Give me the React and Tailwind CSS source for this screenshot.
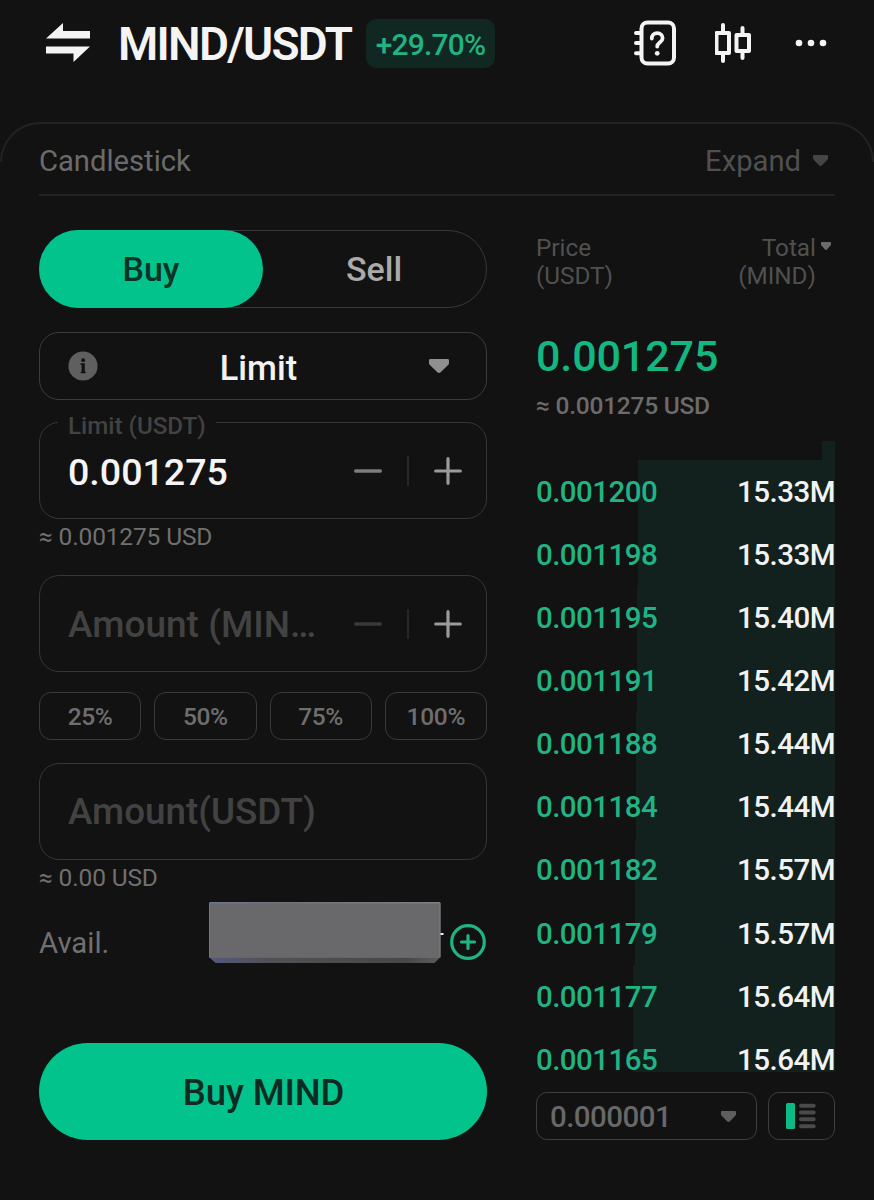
import React, { useState } from 'react';

const bids = [
  { price: '0.001200', total: '15.33M', depth: 197 },
  { price: '0.001198', total: '15.33M', depth: 197 },
  { price: '0.001195', total: '15.40M', depth: 198 },
  { price: '0.001191', total: '15.42M', depth: 198 },
  { price: '0.001188', total: '15.44M', depth: 199 },
  { price: '0.001184', total: '15.44M', depth: 199 },
  { price: '0.001182', total: '15.57M', depth: 200 },
  { price: '0.001179', total: '15.57M', depth: 200 },
  { price: '0.001177', total: '15.64M', depth: 202 },
  { price: '0.001165', total: '15.64M', depth: 202 },
];

const Caret = ({ className }) => (
  <svg viewBox="0 0 20 14" preserveAspectRatio="none" className={className} fill="currentColor">
    <path d="M1.500 0h17C19.600 0 20 .7 20 1.600v2.600c0 .8-.3 1.300-.9 1.900l-7.200 7c-1.200 1.200-2.600 1.200-3.800 0l-7.200-7C.3 5.500 0 5 0 4.200V1.600C0 .7.4 0 1.500 0z" />
  </svg>
);

const Stepper = ({ minusClass }) => (
  <div className="flex items-center">
    <svg viewBox="0 0 28 28" className={`h-7 w-7 ${minusClass}`} stroke="currentColor" strokeWidth="3.4" strokeLinecap="round">
      <path d="M1.700 14h24.600" />
    </svg>
    <div className="ml-[25px] h-[30px] w-0.5 bg-[#272727]" />
    <svg viewBox="0 0 28 28" className="ml-[25px] h-7 w-7 text-[#9a9a9a]" stroke="currentColor" strokeWidth="3.2" strokeLinecap="round">
      <path d="M1.700 14h24.600M14 1.700v24.600" />
    </svg>
  </div>
);

const Header = () => (
  <header className="flex h-[87px] items-center pl-[46px] pr-[47px] text-[#f4f4f4]">
    <svg viewBox="0 0 44 39" className="mb-0.5 h-[39px] w-11" fill="currentColor">
      <path d="M0 15.500 17 0v8h27v7.500zM44 23.500 27.500 39v-8.500H0v-7z" />
    </svg>
    <h1 className="ml-7 w-[234px] whitespace-nowrap text-[46px] font-semibold leading-none tracking-[-1.7px]">MIND/USDT</h1>
    <div className="ml-3.5 flex h-[49px] w-[129px] items-center justify-center rounded-[10px] bg-[#102821] pt-0.5 text-[30px] font-medium tracking-[-0.8px] text-[#20b383]">
      +29.70%
    </div>
    <div className="ml-auto flex items-center pb-0.5">
      <svg viewBox="0 0 42 46" className="h-[46px] w-[42px]" fill="none" stroke="currentColor" strokeWidth="4" strokeLinecap="round">
        <rect x="7.500" y="2.500" width="32.500" height="41" rx="6" />
        <path d="M2 13h5M2 23h5M2 33.200h5" />
        <path d="M17.800 18.500c0-3.200 2.200-5.300 5.400-5.300s5.400 2.100 5.400 5c0 3.800-5.400 4.300-5.400 8.300" strokeWidth="3.800" />
        <circle cx="23.200" cy="33.300" r="2.400" fill="currentColor" stroke="none" />
      </svg>
      <svg viewBox="0 0 36 40" className="ml-[39px] h-10 w-9" fill="none" stroke="currentColor" strokeWidth="4" strokeLinejoin="round" strokeLinecap="round">
        <path d="M1.500 10H14v20H1.500zM21.500 12H34v16H21.500z" />
        <path d="M8 2v7M8 31v7M27.500 5v6M27.500 30v5" />
      </svg>
      <svg viewBox="0 0 32 8" className="ml-11 h-2 w-8" fill="currentColor">
        <circle cx="4" cy="4" r="3.300" />
        <circle cx="16" cy="4" r="3.300" />
        <circle cx="28" cy="4" r="3.300" />
      </svg>
    </div>
  </header>
);

const OrderForm = () => {
  const [side, setSide] = useState('buy');

  return (
    <div className="flex w-[448px] flex-col">
      {/* Buy / Sell switch */}
      <div className="flex h-[78px] rounded-full border border-[#383838] text-[34px] font-medium">
        <button
          onClick={() => setSide('buy')}
          className={`-my-px -ml-px h-[78px] w-56 rounded-full ${side === 'buy' ? 'bg-[#01c38b] text-[#0c3327]' : 'text-[#aaaaaa]'}`}
        >
          Buy
        </button>
        <button
          onClick={() => setSide('sell')}
          className={`-my-px -mr-px h-[78px] w-56 rounded-full pr-0.5 ${side === 'sell' ? 'bg-[#01c38b] text-[#0c3327]' : 'text-[#aaaaaa]'}`}
        >
          Sell
        </button>
      </div>

      {/* Order type */}
      <div className="mt-6 flex h-[68px] items-center rounded-[20px] border-[1.5px] border-[#3c3c3c] pl-7 pr-[37px]">
        <svg viewBox="0 0 30 30" className="h-[30px] w-[30px]">
          <circle cx="15" cy="15" r="14.600" fill="#5f5f5f" />
          <path d="M12.600 12.300h4.200v8.400h1v1.600h-5.200v-1.600h1v-6.800h-1z" fill="#121212" />
          <circle cx="15.200" cy="9.200" r="1.900" fill="#121212" />
        </svg>
        <span className="-ml-2.5 flex-1 pt-1 text-center text-[34.300px] font-medium leading-[48px] text-[#f2f2f2]">Limit</span>
        <Caret className="h-3.5 w-5 text-[#909090]" />
      </div>

      {/* Limit price */}
      <div className="relative mt-[22px] flex h-[97px] items-center justify-between rounded-[20px] border-[1.5px] border-[#363636] pl-7 pr-6">
        <label className="absolute -top-3 left-[18px] bg-[#121212] px-2.5 text-[24.200px] font-medium leading-[30px] text-[#424242]">Limit (USDT)</label>
        <span className="pt-[3px] text-[37.600px] font-medium text-[#f5f5f5]">0.001275</span>
        <Stepper minusClass="text-[#7c7c7c]" />
      </div>
      <p className="mt-0.5 text-[24.500px] leading-[32px] tracking-[-0.15px] text-[#707070]">≈ 0.001275 USD</p>

      {/* Amount in base coin */}
      <div className="mt-[22px] flex h-[97px] items-center justify-between rounded-[20px] border-[1.5px] border-[#363636] pl-7 pr-6">
        <span className="w-[254px] truncate pt-0.5 text-[37px] font-medium leading-[48px] text-[#424242]">Amount (MIND)</span>
        <Stepper minusClass="text-[#3a3a3a]" />
      </div>

      <div className="mt-5 grid grid-cols-4 gap-[13px]">
        {['25%', '50%', '75%', '100%'].map((pct) => (
          <button key={pct} className="h-12 rounded-xl border-[1.5px] border-[#393939] pt-0.5 text-[24.500px] font-medium tracking-[-0.3px] text-[#6e6e6e]">
            {pct}
          </button>
        ))}
      </div>

      {/* Amount in quote coin */}
      <div className="mt-[23px] flex h-[97px] items-center rounded-[20px] border-[1.5px] border-[#363636] pl-7">
        <span className="text-[36.800px] font-medium text-[#424242]">Amount(USDT)</span>
      </div>
      <p className="mt-0.5 text-[24.500px] leading-[32px] tracking-[-0.15px] text-[#707070]">≈ 0.00 USD</p>

      {/* Balance */}
      <div className="mt-2 flex h-[62px] items-start">
        <span className="mt-[23px] w-[170px] text-[29.300px] leading-9 text-[#707070]">Avail.</span>
        <svg viewBox="0 0 236 62" className="h-[62px] w-[236px] shrink-0">
          <defs>
            <linearGradient id="edge">
              <stop offset="0" stopColor="#54597f" />
              <stop offset=".25" stopColor="#505154" />
              <stop offset=".85" stopColor="#48484a" />
              <stop offset="1" stopColor="#5c5c5d" />
            </linearGradient>
            <linearGradient id="rim">
              <stop offset="0" stopColor="#6f7594" />
              <stop offset=".3" stopColor="#727274" />
              <stop offset="1" stopColor="#7f7f80" />
            </linearGradient>
          </defs>
          <path d="M0 1.500Q0 0 1.500 0h228.500q1.500 0 1.500 1.500v53.500l-6 6H6.500L0 55z" fill="url(#edge)" />
          <path d="M0 1.500Q0 0 1.500 0h228.500q1.500 0 1.500 1.500v54H0z" fill="url(#rim)" />
          <path d="M1 1.500h229.500V55.500H1z" fill="#69696b" />
          <path d="M231.500 31h3v2h-3z" fill="#f2f2f2" />
        </svg>
        <svg viewBox="0 0 36 36" className="ml-auto mr-px mt-[22px] h-9 w-9" fill="none" stroke="#20b383" strokeWidth="3.2" strokeLinecap="round">
          <circle cx="18" cy="18" r="16.300" />
          <path d="M11.500 18h13M18 11.500v13" />
        </svg>
      </div>

      <button className="mt-[79px] h-[97px] rounded-full bg-[#01c38b] pl-px pt-[3px] text-[36.500px] font-medium tracking-[-0.1px] text-[#0d2b22]">
        Buy MIND
      </button>
    </div>
  );
};

const OrderBook = () => (
  <div className="flex w-[299px] flex-col">
    <div className="mt-1 flex justify-between text-[24.300px] leading-7 text-[#505050]">
      <div>
        Price
        <br />
        (USDT)
      </div>
      <div className="flex">
        <div className="text-right">
          Total
          <br />
          (MIND)
        </div>
        <Caret className="ml-[5px] mr-1 mt-2 h-2 w-2.5 text-[#6b6b6b]" />
      </div>
    </div>

    <div className="mt-10 text-[43px] font-medium leading-[52px] tracking-[-0.1px] text-[#12b882]">0.001275</div>
    <div className="mt-2 text-[24.500px] font-medium leading-8 tracking-[-0.25px] text-[#6b6b6b]">≈ 0.001275 USD</div>

    {/* Bids, cut off at both ends by the scroll area */}
    <div className="mt-[19px] h-[631px] overflow-hidden">
      <div className="ml-auto h-[19px] w-[13px] bg-[#12211d]" />
      {bids.map((bid) => (
        <div key={bid.price} className="relative flex h-[63.100px] items-center justify-between text-[29.500px] font-medium">
          <div className="absolute -bottom-px right-0 top-0 bg-[#12211d]" style={{ width: bid.depth }} />
          <span className="relative pt-px tracking-[-0.55px] text-[#20b383]">{bid.price}</span>
          <span className="relative pt-px tracking-[-0.5px] text-[#f2f2f2]">{bid.total}</span>
        </div>
      ))}
    </div>

    <div className="mt-5 flex gap-[11px]">
      <div className="flex h-12 w-[221px] items-center justify-between rounded-[11px] border-[1.5px] border-[#3e3e3e] pl-[13px] pr-5">
        <span className="pt-0.5 text-[29.500px] font-medium tracking-[-0.55px] text-[#686868]">0.000001</span>
        <Caret className="h-[11px] w-[15px] text-[#5e5e5e]" />
      </div>
      <div className="flex h-12 w-[67px] items-center justify-center rounded-[11px] border-[1.5px] border-[#3e3e3e] pr-px">
        <svg viewBox="0 0 30 26" className="h-[26px] w-[30px]">
          <rect width="9" height="26" rx="1.500" fill="#0cba86" />
          <path d="M15 2.700h12.700M15 9.500h12.700M15 16.300h12.700M15 23.300h12.700" stroke="#4a4a4a" strokeWidth="4" strokeLinecap="round" />
        </svg>
      </div>
    </div>
  </div>
);

const App = () => {
  return (
    <div className="h-[1200px] w-[874px] overflow-hidden bg-[#121212] font-['Roboto',sans-serif]">
      <Header />

      <main className="relative mt-[35px] px-[39px]">
        <div className="pointer-events-none absolute inset-x-0 top-0 h-10 rounded-t-[40px] border-2 border-b-0 border-[#222222]" />
        <div className="flex h-[74px] items-center justify-between border-b-2 border-[#232323] pt-2 text-[29.200px]">
          <span className="text-[#6b6b6b]">Candlestick</span>
          <span className="flex items-center text-[#505050]">
            Expand
            <Caret className="mb-[3px] ml-3 mr-[7px] h-[11px] w-[15px] text-[#454545]" />
          </span>
        </div>

        <div className="mt-[34px] flex justify-between">
          <OrderForm />
          <OrderBook />
        </div>
      </main>
    </div>
  );
};

export default App;
